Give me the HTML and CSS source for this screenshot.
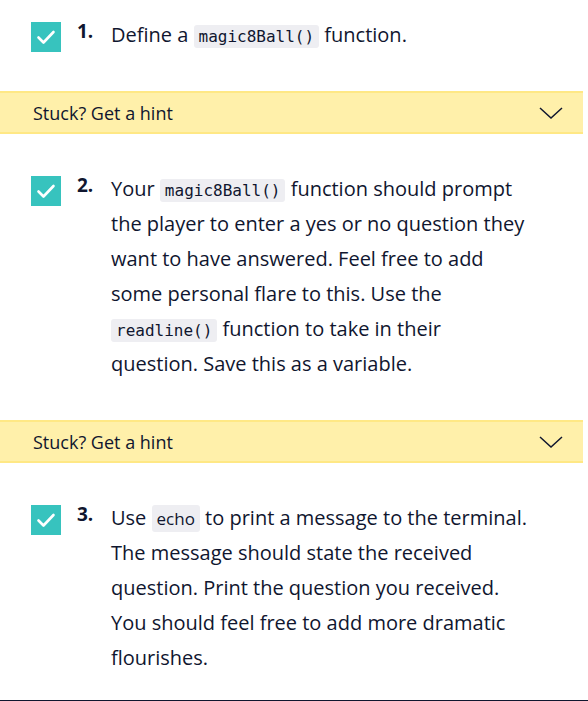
FILE: index.html
```html
<!DOCTYPE html>
<html>
<head>
<meta charset="utf-8">
<link rel="stylesheet" href="styles.css">
</head>
<body>
<div class="page">
  <div class="task first">
    <span class="check"><svg viewBox="0 0 30 30" width="30" height="30"><path d="M7.5 15.5 L12.5 20.5 L22.5 10" fill="none" stroke="#fff" stroke-width="2.6" stroke-linecap="round" stroke-linejoin="round"/></svg></span>
    <span class="num">1.</span>
    <p class="text">Define a <code>magic8Ball()</code> function.</p>
  </div>
  <div class="hint"><span>Stuck? Get a hint</span><svg class="chev" viewBox="0 0 24 12" width="24" height="12"><path d="M1 1 L12 11 L23 1" fill="none" stroke="#10162f" stroke-width="1.5"/></svg></div>
  <div class="task">
    <span class="check"><svg viewBox="0 0 30 30" width="30" height="30"><path d="M7.5 15.5 L12.5 20.5 L22.5 10" fill="none" stroke="#fff" stroke-width="2.6" stroke-linecap="round" stroke-linejoin="round"/></svg></span>
    <span class="num">2.</span>
    <p class="text">Your <code>magic8Ball()</code> function should prompt the player to enter a yes or no question they want to have answered. Feel free to add some personal flare to this. Use the <code>readline()</code> function to take in their question. Save this as a variable.</p>
  </div>
  <div class="hint"><span>Stuck? Get a hint</span><svg class="chev" viewBox="0 0 24 12" width="24" height="12"><path d="M1 1 L12 11 L23 1" fill="none" stroke="#10162f" stroke-width="1.5"/></svg></div>
  <div class="task last">
    <span class="check"><svg viewBox="0 0 30 30" width="30" height="30"><path d="M7.5 15.5 L12.5 20.5 L22.5 10" fill="none" stroke="#fff" stroke-width="2.6" stroke-linecap="round" stroke-linejoin="round"/></svg></span>
    <span class="num">3.</span>
    <p class="text">Use <code class="plain">echo</code> to print a message to the terminal. The message should state the received question. Print the question you received. You should feel free to add more dramatic flourishes.</p>
  </div>
  <div class="footer-line"></div>
</div>
</body>
</html>
```
FILE: styles.css
```css
html, body {
  margin: 0;
  padding: 0;
  background: #fff;
}
.page {
  width: 588px;
  height: 701px;
  overflow: hidden;
  font-family: "Open Sans", "Noto Sans", sans-serif;
  color: #10162f;
}
.task {
  display: flex;
  align-items: flex-start;
  padding: 37px 57px 39px 31px;
}
.task.first {
  padding-top: 17px;
}
.task.last {
  padding-bottom: 25px;
}
.check {
  flex: none;
  width: 30px;
  height: 30px;
  background: #37c3be;
  margin-top: 5px;
  display: flex;
}
.num {
  flex: none;
  width: 34px;
  margin-left: 16px;
  font-weight: 700;
  font-size: 19px;
  line-height: 35px;
  position: relative;
  top: -3px;
}
.text {
  margin: 0;
  font-size: 20px;
  line-height: 35px;
}
code {
  font-family: "DejaVu Sans Mono", monospace;
  font-size: 16px;
  line-height: 1;
  background: #eeeef2;
  border-radius: 3px;
  padding: 2px 5px;
}
code.plain {
  font-family: "Open Sans", sans-serif;
  font-size: 17px;
  padding: 2px 5px;
}
.hint {
  display: flex;
  align-items: center;
  justify-content: space-between;
  height: 39px;
  margin-right: 5px;
  padding: 0 20px 0 33px;
  background: #fff0aa;
  border-top: 2px solid #ffe885;
  border-bottom: 2px solid #ffe885;
  font-size: 18px;
}
.footer-line {
  border-top: 2px solid #10162f;
}
```
